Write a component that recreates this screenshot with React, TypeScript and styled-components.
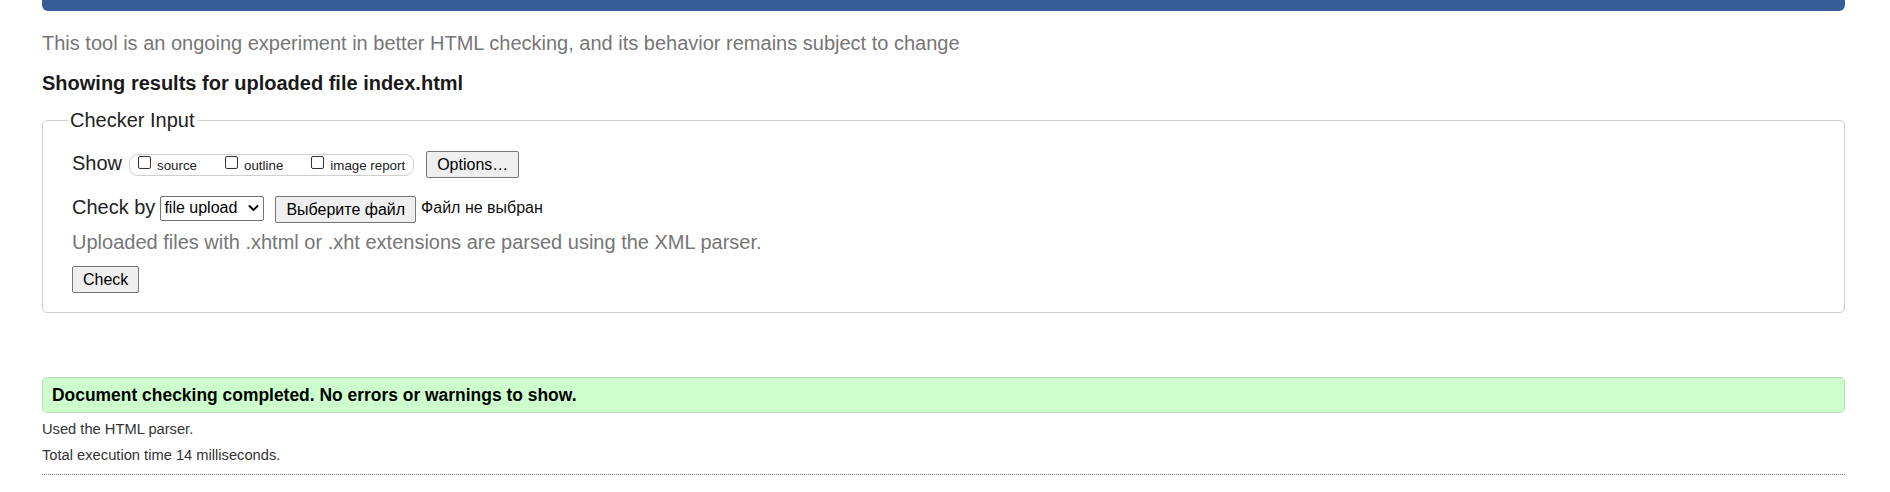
import React from "react";
import styled, { createGlobalStyle } from "styled-components";

const Global = createGlobalStyle`
  html, body { margin: 0; padding: 0; background: #fff; }
  body { font-family: "Liberation Sans", Arial, sans-serif; color: #222; }
`;

const Page = styled.div`
  margin: 0 45px 0 42px;
  display: flex;
  flex-direction: column;
`;

const HeaderBar = styled.div`
  height: 11px;
  background: #365d95;
  border-radius: 0 0 6px 6px;
`;

const Intro = styled.p`
  margin: 20.5px 0 0;
  font-size: 20px;
  line-height: 23px;
  color: #767676;
`;

const Heading = styled.h2`
  margin: 17px 0 0;
  font-size: 20px;
  line-height: 23px;
  font-weight: bold;
  color: #1a1a1a;
`;

const Fieldset = styled.fieldset`
  margin: 14px 0 0;
  padding: 0 29px 19px;
  border: 1px solid #cfcfcf;
  border-radius: 5px;
  min-width: 0;
`;

const Legend = styled.legend`
  padding: 0 2px;
  margin-left: -4px;
  font-size: 20px;
  line-height: 23px;
  color: #222;
`;

const Row = styled.div<{ $top: number }>`
  display: flex;
  align-items: flex-start;
  margin-top: ${(p) => p.$top}px;
`;

const Label = styled.span<{ $top?: number }>`
  font-size: 20px;
  line-height: 23px;
  color: #222;
  margin-top: ${(p) => p.$top ?? 0}px;
  margin-right: 7px;
  white-space: nowrap;
`;

const Pill = styled.div`
  display: flex;
  align-items: flex-start;
  height: 20px;
  margin-top: 3px;
  padding: 0 8px;
  border: 1px solid #cfcfcf;
  border-radius: 9px;
  gap: 28px;
`;

const Option = styled.label`
  display: flex;
  align-items: flex-start;
  gap: 6px;
`;

const Box = styled.span`
  display: block;
  width: 11px;
  height: 11px;
  margin-top: 1px;
  border: 1px solid #333;
  border-radius: 2px;
  background: #fff;
`;

const OptionText = styled.span`
  font-size: 13.33px;
  line-height: 15px;
  margin-top: 3px;
  color: #222;
  white-space: nowrap;
`;

const Button = styled.button<{ $left?: number }>`
  height: 27px;
  padding: 0 10px;
  margin-left: ${(p) => p.$left ?? 0}px;
  font-family: "Liberation Sans", Arial, sans-serif;
  font-size: 16px;
  line-height: 25px;
  color: #000;
  background: #efefef;
  border: 1px solid #767676;
  border-radius: 2px;
  white-space: nowrap;
`;

const Select = styled.div`
  display: flex;
  align-items: center;
  justify-content: space-between;
  box-sizing: border-box;
  width: 104px;
  height: 25px;
  margin-left: -2px;
  padding: 0 4px 0 3px;
  border: 1px solid #767676;
  border-radius: 2px;
  font-size: 16px;
  color: #000;
  background: #fff;
`;

const FileName = styled.span`
  margin: 3px 0 0 5px;
  font-size: 16px;
  line-height: 18px;
  color: #111;
  white-space: nowrap;
`;

const Hint = styled.p`
  margin: 8.5px 0 0;
  font-size: 20px;
  line-height: 23px;
  color: #767676;
`;

const Success = styled.div`
  margin-top: 64px;
  padding: 7px 9px;
  border: 1px solid #c2d6c2;
  border-radius: 5px;
  background: #ccffcc;
  font-size: 17.45px;
  line-height: 20px;
  font-weight: bold;
  color: #000;
`;

const Detail = styled.p<{ $top: number }>`
  margin: ${(p) => p.$top}px 0 0;
  font-size: 14.7px;
  line-height: 17px;
  color: #333;
`;

const Rule = styled.div`
  margin-top: 9.5px;
  border-top: 1px dotted #777;
`;

const Chevron = () => (
  <svg width="11" height="8" viewBox="0 0 11 8" fill="none">
    <path d="M1.5 2l4 4 4-4" stroke="#000" strokeWidth="1.8" strokeLinecap="round" strokeLinejoin="round" />
  </svg>
);

const options = ["source", "outline", "image report"];

export default function App() {
  return (
    <>
      <Global />
      <Page>
        <HeaderBar />
        <Intro>This tool is an ongoing experiment in better HTML checking, and its behavior remains subject to change</Intro>
        <Heading>Showing results for uploaded file index.html</Heading>
        <Fieldset>
          <Legend>Checker Input</Legend>
          <Row $top={19.5}>
            <Label $top={1}>Show</Label>
            <Pill>
              {options.map((o) => (
                <Option key={o}>
                  <Box />
                  <OptionText>{o}</OptionText>
                </Option>
              ))}
            </Pill>
            <Button $left={12}>Options…</Button>
          </Row>
          <Row $top={17.5}>
            <Label>Check by</Label>
            <Select>
              <span>file upload</span>
              <Chevron />
            </Select>
            <Button $left={11}>Выберите файл</Button>
            <FileName>Файл не выбран</FileName>
          </Row>
          <Hint>Uploaded files with .xhtml or .xht extensions are parsed using the XML parser.</Hint>
          <Row $top={11.5}>
            <Button>Check</Button>
          </Row>
        </Fieldset>
        <Success>Document checking completed. No errors or warnings to show.</Success>
        <Detail $top={8.5}>Used the HTML parser.</Detail>
        <Detail $top={9}>Total execution time 14 milliseconds.</Detail>
        <Rule />
      </Page>
    </>
  );
}
